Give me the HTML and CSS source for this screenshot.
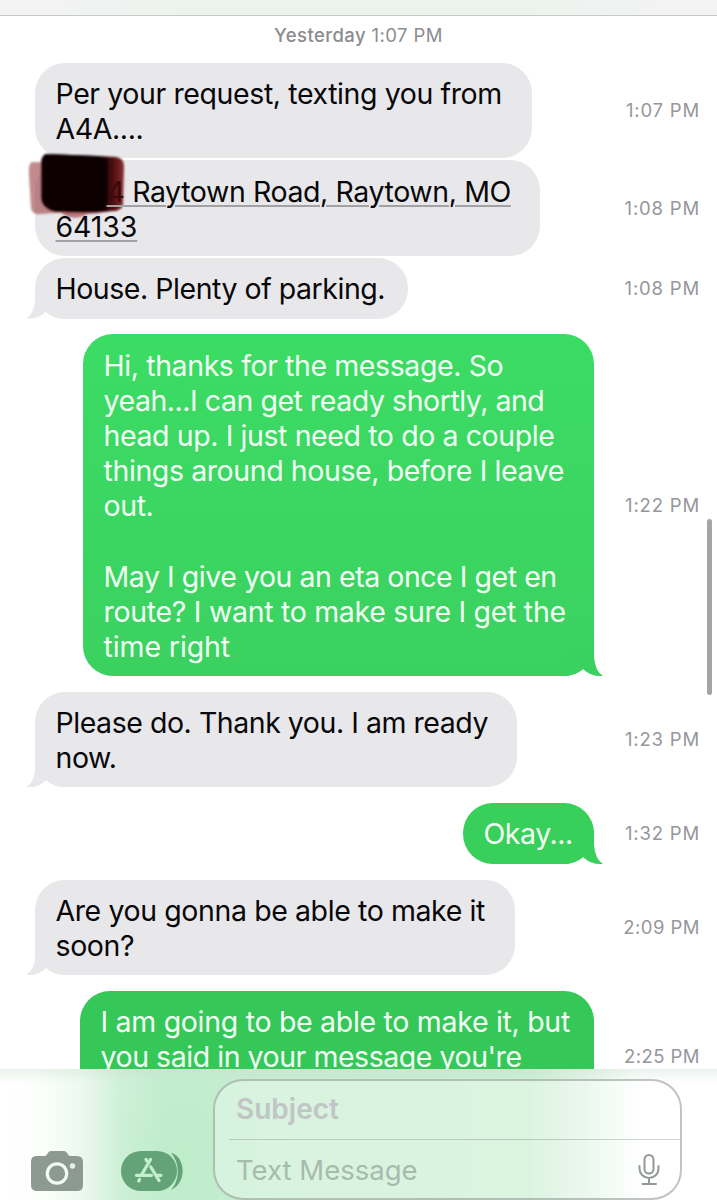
FILE: index.html
```html
<!DOCTYPE html>
<html lang="en">
<head>
<meta charset="utf-8">
<title>Messages</title>
<link rel="stylesheet" href="styles.css">
</head>
<body>
<div class="phone">
  <header class="navbar"></header>
  <main class="thread">
    <div class="day"><b>Yesterday</b> 1:07 PM</div>

    <div class="row h2">
      <div class="bubble in w1 high">Per your request, texting you from<br>A4A....</div>
      <time>1:07 PM</time>
    </div>
    <div class="row h2 g2">
      <div class="bubble in w2"><i class="covered"></i><span class="link"><span class="faint">4</span> Raytown Road, Raytown, MO<br><span class="wide">64133</span></span>
        <svg class="scribble" width="110" height="76" viewBox="0 0 110 76">
          <defs><filter id="soft" x="-10%" y="-10%" width="120%" height="120%"><feGaussianBlur stdDeviation="1.2"/></filter>
          <linearGradient id="blood"><stop offset="0" stop-color="#100003"/><stop offset=".74" stop-color="#120002"/><stop offset=".86" stop-color="#4a0b0d"/><stop offset="1" stop-color="#873034"/></linearGradient></defs>
          <g filter="url(#soft)">
            <path d="M10 14Q6 15 7 28L9 60Q10 67 18 66L94 61L96 15Z" fill="#9b4348" fill-opacity=".62"/>
            <path d="M32 58L92 61Q80 66 66 66Q52 73 42 67Z" fill="#a33a40" fill-opacity=".65"/>
            <path d="M24 6Q50 7 75 8L94 9Q102 10 102 18L101 57Q99 63 91 63Q60 66 31 63Q20 60 19 50L19 14Q20 7 24 6Z" fill="url(#blood)"/>
            <path d="M23 6L77 8Q86 10 86 22L85 56Q81 64 72 64L35 64Q21 62 20 50Z" fill="#0e0002"/>
          </g>
        </svg>
      </div>
      <time>1:08 PM</time>
    </div>
    <div class="row h1 g2b">
      <div class="bubble in w3 tail tight">House. Plenty of parking.</div>
      <time>1:08 PM</time>
    </div>
    <div class="row big">
      <div class="bubble out w4 tail">Hi, thanks for the message. So<br><span class="tight">yeah...I can get ready shortly, and</span><br>head up. I just need to do a couple<br>things around house, before I leave<br>out.<br><br><span class="tight">May I give you an eta once I get en</span><br><span class="loose">route? I want to make sure I get the</span><br><span class="wide">time right</span></div>
      <time>1:22 PM</time>
    </div>
    <div class="row h2 gap">
      <div class="bubble in w5 tail tight">Please do. Thank you. I am ready<br>now.</div>
      <time>1:23 PM</time>
    </div>
    <div class="row h1 gap">
      <div class="bubble out w6 tail dark tight">Okay...</div>
      <time>1:32 PM</time>
    </div>
    <div class="row h2 gap">
      <div class="bubble in w7 tail">Are you gonna be able to make it<br>soon?</div>
      <time class="snug">2:09 PM</time>
    </div>
    <div class="row h3 gap">
      <div class="bubble out w8 darker"><span class="loose">I am going to be able to make it, but</span><br><span class="tight">you said in your message you're</span><br></div>
      <time class="snug">2:25 PM</time>
    </div>
  </main>
  <div class="scrollbar"></div>
  <footer class="composer">
    <svg class="camera" width="54" height="42" viewBox="0 0 54 42">
      <path d="M6 6h9c2 0 3-5 6-5h13c3 0 4 5 6 5h7q6 0 6 6v23q0 6-6 6H7q-6 0-6-6V12q0-6 5-6z" fill="#8c9a91"/>
      <circle cx="27" cy="23.500" r="9.700" fill="none" stroke="#f2fbf4" stroke-width="3.200"/>
      <circle cx="42.500" cy="16" r="2.700" fill="#e2f5e7"/>
    </svg>
    <svg class="apps" width="66" height="42" viewBox="0 0 66 42">
      <path d="M51 3C65 6 68 32 51 40C60 30 60 13 51 3Z" fill="#64a377"/>
      <rect x="1" y="1" width="56" height="40" rx="20" fill="#64a377"/>
      <path d="M30.500 9.500L21.500 25M26 9.500L28.500 13.500M30.800 17L39 30.500M16.500 25.300H31.500M36.500 25.300H41M19.500 29.500L18.800 31" stroke="#c3efcf" stroke-width="3.300" stroke-linecap="round" fill="none"/>
    </svg>
    <div class="field">
      <div class="subject">Subject</div>
      <div class="message"><span>Text Message</span>
        <svg width="22" height="34" viewBox="0 0 22 34" fill="none" stroke="#929894" stroke-width="2" stroke-linecap="round">
          <rect x="6.500" y="2" width="9" height="18.500" rx="4.500"/>
          <path d="M1.500 13v2.500a9.500 9.500 0 0 0 19 0V13M11 25.500v5M4.500 31h13.500"/>
        </svg>
      </div>
    </div>
  </footer>
</div>
</body>
</html>
```
FILE: styles.css
```css
* { box-sizing: border-box; }
body { margin: 0; background: #fff; font-family: Inter, "Liberation Sans", sans-serif; }
.phone { position: relative; width: 717px; height: 1200px; overflow: hidden; background: #fff; }
.navbar { height: 16px; border-bottom: 1.500px solid #c5cac7; background: linear-gradient(90deg, #f3f3f3 5%, #eaf3ed 32%, #ebf3ee 70%, #f3f3f3 95%); }
.day { height: 46.500px; padding-top: 8px; text-align: center; font-size: 18.500px; line-height: 23px; letter-spacing: 0.420px; color: #8b8b90; }
.day b { font-weight: 500; }
.row { display: flex; align-items: center; padding: 0 17px 0 35px; }
.row time { margin-left: auto; font-size: 18.500px; line-height: 22px; color: #96969b; letter-spacing: 0.820px; white-space: nowrap; }
.row .snug { letter-spacing: 0.450px; }
.h1 { height: 61px; }
.h2 { height: 95.500px; }
.h3 { height: 131px; }
.big { height: 342px; margin-top: 15.500px; }
.g2 { margin-top: 2px; }
.g2b { margin-top: 2px; }
.gap { margin-top: 15.700px; }
.bubble { position: relative; isolation: isolate; height: 100%; padding: 13.500px 0 0 20.500px; border-radius: 30px; font-size: 28.500px; line-height: 35.200px; letter-spacing: -0.400px; white-space: nowrap; }
.high { padding-top: 13px; }
.tight { letter-spacing: -0.460px; }
.loose { letter-spacing: -0.300px; }
.wide { letter-spacing: -0.100px; }
.in { background: #e8e8eb; color: #08080a; }
.out { margin-left: auto; background: linear-gradient(#3bdc64, #3bd160); color: #f2fff4; }
.out + time { margin-left: 30px; width: 76px; text-align: right; }
.dark { background: #39cf5b; }
.darker { background: #36c759; }
.w1 { width: 497px; }
.w2 { width: 505px; }
.w3 { width: 373px; }
.w4 { width: 511px; }
.w5 { width: 482px; }
.w6 { width: 131px; }
.w7 { width: 480px; }
.w8 { width: 514px; }
.tail::after { content: ""; position: absolute; z-index: -1; bottom: 0; width: 40px; height: 34px; }
.in.tail::after { left: -9px; background: #e8e8eb; clip-path: path("M9 0V17Q8 29 0 34Q12 35 20 27Q28 34 40 34V0Z"); }
.out.tail::after { right: -9px; background: #3bd160; clip-path: path("M31 0V15Q32 29 40 34Q28 35 20 27Q12 34 0 34V0Z"); }
.out.dark::after { background: #39cf5b; }
.covered { display: inline-block; width: 51px; }
.link { text-decoration: underline; text-decoration-color: #a2a2a5; text-decoration-thickness: 1.500px; text-underline-offset: 3px; }
.faint { color: #3a090b; }
.scribble { position: absolute; z-index: -1; left: -13px; top: -12px; }
.scrollbar { position: absolute; left: 707px; top: 519px; width: 5px; height: 176px; border-radius: 3px; background: #a5a5a5; }
.composer { position: absolute; left: 0; top: 1069px; width: 717px; height: 131px; display: flex; align-items: flex-start; padding: 10px 0 0 30px; background: linear-gradient(rgba(197,222,204,.35), rgba(197,222,204,0) 14px), radial-gradient(ellipse 80px 120px at 185px 90px, rgba(183,237,199,.5), rgba(183,237,199,0)), linear-gradient(90deg, #fff 0, #fcfefc 40px, #edf9f0 80px, #d0f0d8 120px, #c5edd0 160px, #c5edd0 220px, #cbefd2 530px, #e2f5e7 585px, #fff 640px); }
.camera { margin-top: 71px; }
.apps { margin: 71px 0 0 36px; }
.field { margin-left: 27px; width: 469px; height: 121px; border: 2px solid rgba(140,150,143,.55); border-radius: 30px; background: rgba(255,255,255,.32); font-size: 27.500px; }
.subject { height: 59px; margin-left: 14px; padding: 8.500px 0 0 7px; border-bottom: 1.500px solid rgba(130,145,135,.4); font-size: 28px; font-weight: 600; line-height: 38px; color: #c0c5c5; }
.message { display: flex; justify-content: space-between; padding: 11px 20px 0 21px; line-height: 38px; color: #a7bbad; }
.message svg { margin-top: 2px; }
```
